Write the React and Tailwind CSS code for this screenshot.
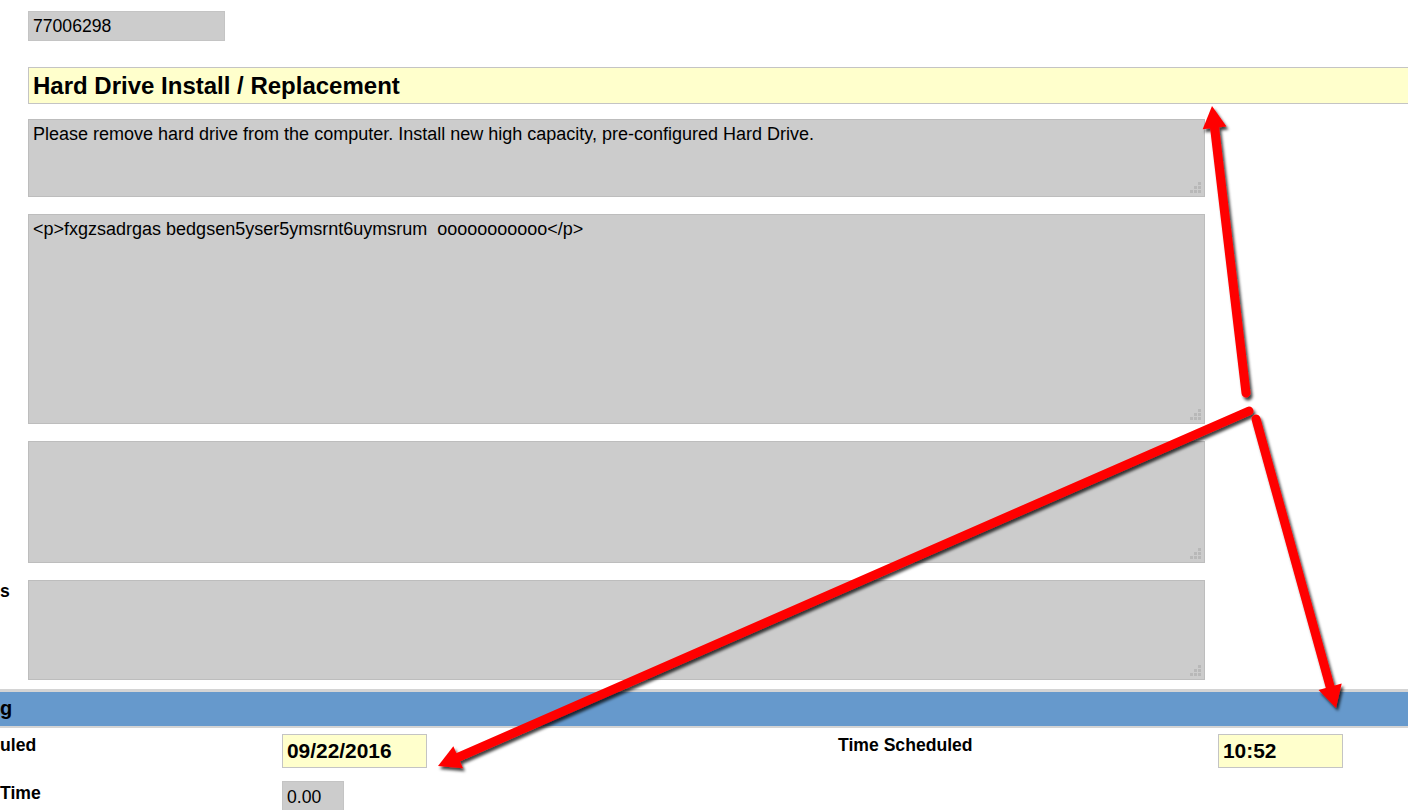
import React from 'react';

const Grip = () => (
    <svg className="absolute right-[3px] bottom-[3px]" width="11" height="11" viewBox="0 0 11 11">
        <rect x="8" y="0" width="3" height="3" fill="#b8b8b8" />
        <rect x="4" y="4" width="3" height="3" fill="#b8b8b8" />
        <rect x="8" y="4" width="3" height="3" fill="#b8b8b8" />
        <rect x="0" y="8" width="3" height="3" fill="#b8b8b8" />
        <rect x="4" y="8" width="3" height="3" fill="#b8b8b8" />
        <rect x="8" y="8" width="3" height="3" fill="#b8b8b8" />
    </svg>
);

const TextBox = ({ height, children }) => (
    <div className={`relative w-[1177px] ${height} bg-[#cccccc] border border-[#bdbdbd] px-[4px] pt-[3px] text-[18px] leading-[22px] text-black whitespace-pre-wrap`}>
        {children}
        <Grip />
    </div>
);

const arrows = [
    { from: [1246, 393], to: [1212, 106] },
    { from: [1249, 411], to: [438, 766] },
    { from: [1256, 419], to: [1336, 708] },
];

const Arrow = ({ from, to }) => {
    const dx = to[0] - from[0];
    const dy = to[1] - from[1];
    const len = Math.hypot(dx, dy);
    const ux = dx / len;
    const uy = dy / len;
    const headLen = 22;
    const halfW = 12;
    const bx = to[0] - ux * headLen;
    const by = to[1] - uy * headLen;
    const head = [
        `${to[0]},${to[1]}`,
        `${bx - uy * halfW},${by + ux * halfW}`,
        `${bx + uy * halfW},${by - ux * halfW}`,
    ].join(' ');
    return (
        <g>
            <line x1={from[0]} y1={from[1]} x2={bx + ux * 4} y2={by + uy * 4} stroke="#ff0000" strokeWidth="9" strokeLinecap="round" />
            <polygon points={head} fill="#ff0000" />
        </g>
    );
};

const App = () => {
    return (
        <div className="relative w-[1408px] h-[810px] overflow-hidden bg-white font-['Liberation_Sans',Arial,sans-serif] text-black">
            <div className="pl-[28px] pt-[11px]">
                <div className="w-[197px] h-[30px] bg-[#cccccc] border border-[#c4c4c4] px-[4px] text-[17.6px] leading-[28px]">
                    77006298
                </div>

                <div className="mt-[26px] w-[1400px] h-[37px] bg-[#ffffcc] border border-[#c4c4c4] px-[4px] text-[24px] font-bold leading-[35px]">
                    Hard Drive Install / Replacement
                </div>

                <div className="mt-[15px]">
                    <TextBox height="h-[78px]">
                        Please remove hard drive from the computer. Install new high capacity, pre-configured Hard Drive.
                    </TextBox>
                </div>
                <div className="mt-[17px]">
                    <TextBox height="h-[210px]">
                        {'<p>fxgzsadrgas bedgsen5yser5ymsrnt6uymsrum  ooooooooooo</p>'}
                    </TextBox>
                </div>
                <div className="mt-[17px]">
                    <TextBox height="h-[122px]" />
                </div>
            </div>

            <div className="flex mt-[17px]">
                <div className="w-[28px] pt-[1px] text-[17.6px] font-bold leading-[20px]">s</div>
                <TextBox height="h-[100px]" />
            </div>

            <div className="mt-[9px] border-t-[3px] border-b-[2px] border-[#d4d4d4]">
                <div className="h-[34px] bg-[#6699cc] text-[20px] font-bold leading-[32px] text-black">g</div>
            </div>

            <div className="flex mt-[6px]">
                <div className="w-[282px] text-[17.6px] font-bold leading-[22px]">uled</div>
                <div className="w-[556px]">
                    <div className="w-[145px] h-[34px] bg-[#ffffcc] border border-[#c4c4c4] px-[4px] text-[20.9px] font-bold leading-[32px]">
                        09/22/2016
                    </div>
                </div>
                <div className="w-[380px] text-[17.6px] font-bold leading-[22px]">Time Scheduled</div>
                <div className="w-[125px] h-[34px] bg-[#ffffcc] border border-[#c4c4c4] px-[4px] text-[20.9px] font-bold leading-[32px]">
                    10:52
                </div>
            </div>

            <div className="flex mt-[13px]">
                <div className="w-[282px] pt-[1px] text-[17.6px] font-bold leading-[22px]">Time</div>
                <div className="w-[62px] h-[32px] bg-[#cccccc] border border-[#c4c4c4] px-[4px] text-[17.6px] leading-[30px]">
                    0.00
                </div>
            </div>

            <svg className="absolute inset-0 pointer-events-none" width="1408" height="810">
                <defs>
                    <filter id="arrowShadow" x="-10%" y="-10%" width="120%" height="120%">
                        <feDropShadow dx="2" dy="3" stdDeviation="1.8" floodColor="#000" floodOpacity="0.75" />
                    </filter>
                </defs>
                <g filter="url(#arrowShadow)">
                    {arrows.map((a, i) => (
                        <Arrow key={i} from={a.from} to={a.to} />
                    ))}
                </g>
            </svg>
        </div>
    );
};

export default App;
